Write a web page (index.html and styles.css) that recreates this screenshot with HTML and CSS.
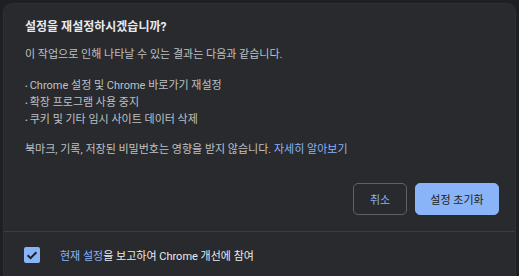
FILE: index.html
```html
<!DOCTYPE html>
<html lang="ko">
<head>
<meta charset="utf-8">
<link rel="stylesheet" href="styles.css">
</head>
<body>
<div class="dialog">
  <div class="main">
    <h1 class="title">설정을 재설정하시겠습니까?</h1>
    <p class="para">이 작업으로 인해 나타날 수 있는 결과는 다음과 같습니다.</p>
    <ul class="list">
      <li>Chrome 설정 및 Chrome 바로가기 재설정</li>
      <li>확장 프로그램 사용 중지</li>
      <li>쿠키 및 기타 임시 사이트 데이터 삭제</li>
    </ul>
    <p class="para">북마크, 기록, 저장된 비밀번호는 영향을 받지 않습니다. <a class="link">자세히 알아보기</a></p>
    <div class="actions">
      <button class="btn btn-cancel">취소</button>
      <button class="btn btn-primary">설정 초기화</button>
    </div>
  </div>
  <div class="footer">
    <span class="checkbox">
      <svg width="16" height="16" viewBox="0 0 16 16"><path d="M3.6 8.2 L6.6 11.1 L12.4 5.2" fill="none" stroke="#202124" stroke-width="2"/></svg>
    </span>
    <span class="footer-text"><a class="link">현재 설정</a>을 보고하여 Chrome 개선에 참여</span>
  </div>
</div>
</body>
</html>
```
FILE: styles.css
```css
html, body {
  margin: 0;
  padding: 0;
  background: #1e1f22;
  width: 519px;
  height: 276px;
  overflow: hidden;
}
body {
  font-family: Roboto, "Noto Sans CJK KR", sans-serif;
  padding: 4px 4px 0 4px;
  box-sizing: border-box;
}
.dialog {
  background: #292a2d;
  border-radius: 8px 8px 0 0;
  height: 272px;
  overflow: hidden;
  box-shadow: 0 0 0 1px #2f3033;
}
.main {
  padding: 13px 16px 16px 21px;
  border-bottom: 1px solid #3c3d40;
}
.title {
  margin: 0;
  font-size: 12px;
  font-weight: 700;
  line-height: 20px;
  color: #e8eaed;
}
.para {
  margin: 10px 0 0 0;
  font-size: 11px;
  line-height: 16px;
  color: #bdc1c6;
}
.list {
  margin: 15px 0 0 0;
  padding: 0;
  list-style: none;
  font-size: 11px;
  line-height: 16px;
  color: #bdc1c6;
}
.list li::before {
  content: "• ";
  font-size: 8px;
}
.list + .para {
  margin-top: 13px;
}
.link {
  color: #8ab4f8;
}
.actions {
  display: flex;
  justify-content: flex-end;
  gap: 8px;
  margin-top: 25px;
}
.btn {
  height: 32px;
  border-radius: 5px;
  font-family: Roboto, "Noto Sans CJK KR", sans-serif;
  font-size: 11px;
  border: 1px solid #5f6368;
}
.btn-cancel {
  background: transparent;
  color: #8ab4f8;
  width: 54px;
  padding: 0;
}
.btn-primary {
  background: #8ab4f8;
  border-color: #8ab4f8;
  color: #202124;
  width: 84px;
  padding: 0;
}
.footer {
  display: flex;
  align-items: center;
  height: 46px;
  padding-left: 20px;
  gap: 20px;
}
.checkbox {
  width: 16px;
  height: 16px;
  border-radius: 2px;
  background: #8ab4f8;
  display: flex;
}
.footer-text {
  font-size: 11px;
  color: #e8eaed;
}
```
